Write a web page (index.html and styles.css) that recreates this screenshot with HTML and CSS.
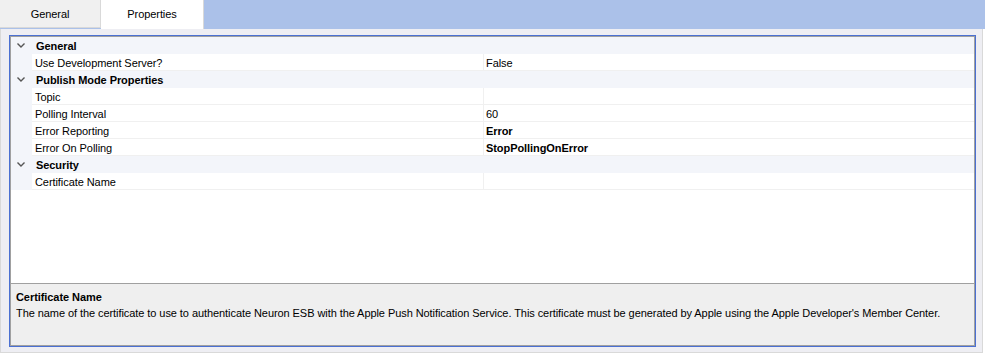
FILE: index.html
```html
<!DOCTYPE html>
<html lang="en">
<head>
    <meta charset="UTF-8">
    <title>Properties</title>
    <link rel="stylesheet" href="styles.css">
</head>
<body>
    <div class="tabs">
        <div class="tab">General</div>
        <div class="tab active">Properties</div>
    </div>

    <div class="panel">
        <div class="frame">
            <div class="inner">
                <div class="grid">
                    <div class="category"><span class="chev"><svg width="8" height="5" viewBox="0 0 8 5"><polyline points="0.5,0.5 4,4 7.5,0.5" fill="none" stroke="#555" stroke-width="1.4"/></svg></span>General</div>
                    <div class="row"><span class="margin"></span><span class="name">Use Development Server?</span><span class="value">False</span></div>

                    <div class="category"><span class="chev"><svg width="8" height="5" viewBox="0 0 8 5"><polyline points="0.5,0.5 4,4 7.5,0.5" fill="none" stroke="#555" stroke-width="1.4"/></svg></span>Publish Mode Properties</div>
                    <div class="row"><span class="margin"></span><span class="name">Topic</span><span class="value"></span></div>
                    <div class="row"><span class="margin"></span><span class="name">Polling Interval</span><span class="value">60</span></div>
                    <div class="row"><span class="margin"></span><span class="name">Error Reporting</span><span class="value bold">Error</span></div>
                    <div class="row"><span class="margin"></span><span class="name">Error On Polling</span><span class="value bold">StopPollingOnError</span></div>

                    <div class="category"><span class="chev"><svg width="8" height="5" viewBox="0 0 8 5"><polyline points="0.5,0.5 4,4 7.5,0.5" fill="none" stroke="#555" stroke-width="1.4"/></svg></span>Security</div>
                    <div class="row"><span class="margin"></span><span class="name">Certificate Name</span><span class="value"></span></div>
                </div>
                <div class="desc">
                    <div class="desc-title">Certificate Name</div>
                    <div class="desc-text">The name of the certificate to use to authenticate Neuron ESB with the Apple Push Notification Service. This certificate must be generated by Apple using the Apple Developer's Member Center.</div>
                </div>
            </div>
        </div>
    </div>
</body>
</html>
```

FILE: styles.css
```css
body {
    margin: 0;
    width: 985px;
    height: 356px;
    background: #ffffff;
    font-family: 'Liberation Sans', Arial, sans-serif;
    font-size: 11px;
    letter-spacing: -0.07px;
    color: #000;
    overflow: hidden;
}

/* Tab strip */
.tabs {
    display: flex;
    height: 29px;
    background: #abc1e9;
}

.tab {
    box-sizing: border-box;
    width: 101px;
    height: 28px;
    line-height: 28px;
    text-align: center;
    background: #f0f0f0;
    border-right: 1px solid #d9d9d9;
    border-bottom: 1px solid #d9d9d9;
}

.tab.active {
    width: 103px;
    height: 29px;
    background: #ffffff;
    border: none;
    border-right: 1px solid #d9d9d9;
}

/* Panel under the tabs */
.panel {
    box-sizing: border-box;
    width: 983px;
    height: 324px;
    background: #eeeef3;
    border: 1px solid #d9d9d9;
    border-top: none;
    padding: 6px 6px 0 8px;
}

.frame {
    box-sizing: border-box;
    width: 967px;
    height: 312px;
    border: 1px solid #4b70d2;
}

.inner {
    box-sizing: border-box;
    height: 100%;
    border: 1px solid #a0a0a0;
    display: flex;
    flex-direction: column;
}

/* Property grid */
.grid {
    height: 246px;
    background: #ffffff;
    border-bottom: 1px solid #a0a0a0;
}

.category {
    display: flex;
    align-items: center;
    height: 17px;
    padding-top: 1px;
    box-sizing: border-box;
    background: #f3f5fa;
    font-weight: bold;
}

.chev {
    width: 25px;
    display: flex;
    justify-content: center;
}

.chev svg {
    margin-left: -5px;
    margin-top: -1px;
}

.row {
    display: flex;
    height: 17px;
    line-height: 16px;
}

.margin {
    width: 21px;
    background: #f3f5fa;
}

.name {
    box-sizing: border-box;
    width: 451px;
    padding: 1px 0 0 3px;
    border-bottom: 1px solid #f0f0f0;
}

.value {
    flex: 1;
    padding: 1px 0 0 2px;
    border-left: 1px solid #f0f0f0;
    border-bottom: 1px solid #f0f0f0;
}

.bold {
    font-weight: bold;
}

/* Description area */
.desc {
    flex: 1;
    background: #efefef;
    padding: 5px 5px 0;
    line-height: 16px;
}

.desc-title {
    font-weight: bold;
}
```
